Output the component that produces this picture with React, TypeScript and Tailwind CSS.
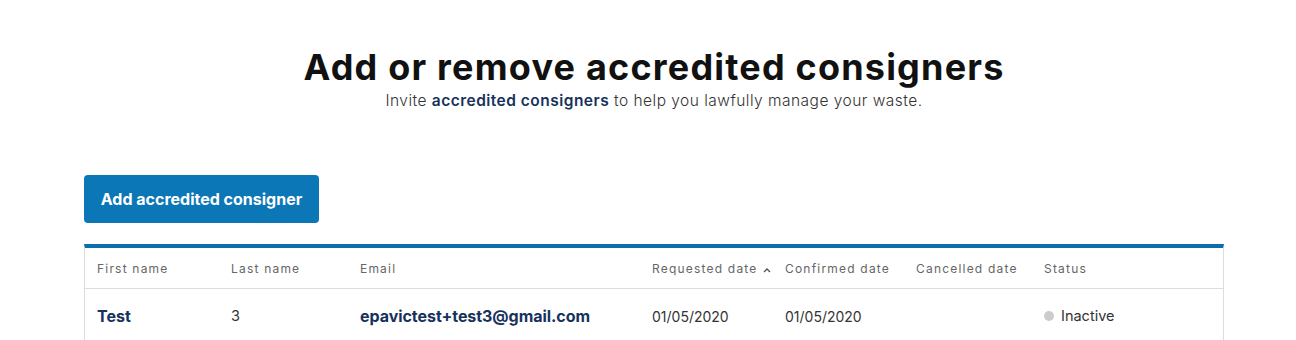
import React from "react";

const cols = "grid grid-cols-[134px_129px_292px_133px_131px_128px_1fr] pl-[12px]";

export default function App() {
  return (
    <div className="w-[1296px] h-[340px] bg-white overflow-hidden" style={{ fontFamily: "Inter, 'Noto Sans', sans-serif" }}>
      <div className="pl-[84px]">
        <div className="w-[1140px]">
          <div className="pt-[45px] flex flex-col items-center">
            <h1 className="text-[36px] leading-[44px] font-bold text-[#111] tracking-[1.2px]">Add or remove accredited consigners</h1>
            <p className="mt-[1px] text-[15.5px] leading-[22px] font-light text-[#333] tracking-[0.48px]">
              Invite <span className="font-semibold text-[#16325c]">accredited consigners</span> to help you lawfully manage your waste.
            </p>
          </div>
          <div className="pt-[63px]">
            <button className="w-[235px] h-[48px] rounded-[4px] bg-[#0b77b6] text-white text-[16px] font-bold">Add accredited consigner</button>
            <div className="mt-[21px] w-[1140px] border-t-[4px] border-[#0b6fab] border-x border-x-[#ddd]">
              <div className={`${cols} h-[41px] pt-[2px] items-center border-b border-[#ddd] text-[12px] tracking-[1.2px] text-[#666]`}>
                <div>First name</div>
                <div>Last name</div>
                <div>Email</div>
                <div className="flex items-center gap-[5px]">
                  Requested date
                  <svg width="8" height="6" viewBox="0 0 8 6" className="mt-[1px]">
                    <path d="M1 5 L4 2 L7 5" fill="none" stroke="#555" strokeWidth="1.4" />
                  </svg>
                </div>
                <div>Confirmed date</div>
                <div>Cancelled date</div>
                <div>Status</div>
              </div>
              <div className={`${cols} h-[56px] pb-[2px] items-center text-[14.5px] text-[#333]`}>
                <div className="font-bold text-[16px] text-[#16325c]">Test</div>
                <div>3</div>
                <div className="font-bold text-[16px] text-[#16325c] tracking-[-0.05px]">epavictest+test3@gmail.com</div>
                <div className="text-[14px]">01/05/2020</div>
                <div className="text-[14px]">01/05/2020</div>
                <div></div>
                <div className="flex items-center gap-[7px]">
                  <span className="w-[10px] h-[10px] rounded-full bg-[#ccc]"></span>
                  Inactive
                </div>
              </div>
            </div>
          </div>
        </div>
      </div>
    </div>
  );
}
